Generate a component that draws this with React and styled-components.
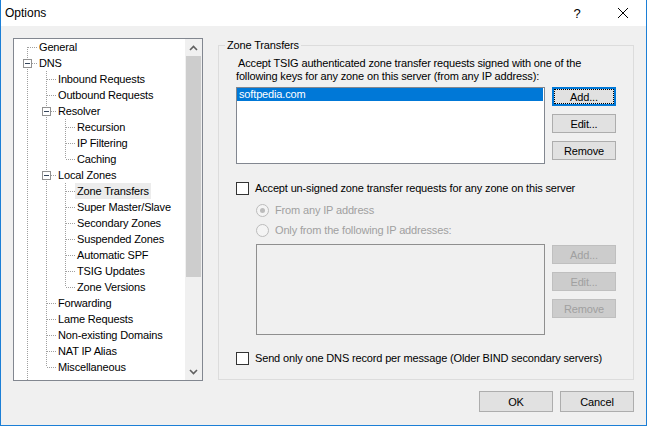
import React from "react";
import styled, { createGlobalStyle } from "styled-components";

const GlobalStyle = createGlobalStyle`
  html, body {
    margin: 0;
    padding: 0;
    background: #f0f0f0;
  }
  body {
    font-family: "Liberation Sans", Arial, sans-serif;
    font-size: 11px;
    letter-spacing: -0.15px;
    color: #000;
  }
`;

const treeItems = [
  ["General", 0],
  ["DNS", 0],
  ["Inbound Requests", 1],
  ["Outbound Requests", 1],
  ["Resolver", 1],
  ["Recursion", 2],
  ["IP Filtering", 2],
  ["Caching", 2],
  ["Local Zones", 1],
  ["Zone Transfers", 2],
  ["Super Master/Slave", 2],
  ["Secondary Zones", 2],
  ["Suspended Zones", 2],
  ["Automatic SPF", 2],
  ["TSIG Updates", 2],
  ["Zone Versions", 2],
  ["Forwarding", 1],
  ["Lame Requests", 1],
  ["Non-existing Domains", 1],
  ["NAT IP Alias", 1],
  ["Miscellaneous", 1],
];

// does the branch at `level` keep going below row i?
const continues = (i, level) => {
  for (let j = i + 1; j < treeItems.length; j++) {
    const d = treeItems[j][1];
    if (d < level) return false;
    if (d === level) return true;
  }
  return level === 0;
};

const Window = styled.div`
  width: 647px;
  height: 426px;
  box-sizing: border-box;
  border: 1px solid #1c7fd6;
  border-top: none;
  background: #f0f0f0;
  display: flex;
  flex-direction: column;
`;

const TitleBar = styled.div`
  height: 26px;
  background: #fff;
  display: flex;
  align-items: center;
  padding-left: 4px;
`;

const Title = styled.div`
  flex: 1;
  font-size: 12px;
  letter-spacing: 0;
`;

const CaptionButton = styled.div`
  width: 46px;
  height: 26px;
  display: flex;
  align-items: center;
  justify-content: center;
  font-size: 13px;
`;

const Body = styled.div`
  flex: 1;
  padding: 12px 12px 0 12px;
  display: flex;
  flex-direction: column;
`;

const Main = styled.div`
  display: flex;
  align-items: flex-start;
  gap: 15px;
`;

const Tree = styled.div`
  width: 190px;
  height: 343px;
  box-sizing: border-box;
  border: 1px solid #828790;
  background: #fff;
  display: flex;
`;

const TreeList = styled.div`
  flex: 1;
  overflow: hidden;
  display: flex;
  flex-direction: column;
`;

const TreeRow = styled.div`
  height: 16px;
  flex: none;
  display: flex;
  align-items: center;
  white-space: nowrap;
`;

const TreeLabel = styled.span`
  line-height: 16px;
  padding: 0 2px;
  margin-left: -2px;
  background: ${(p) => (p.$selected ? "#ececec" : "transparent")};
`;

const Filler = styled.div`
  flex: 1;
  background-image: linear-gradient(to bottom, #a0a0a0 50%, transparent 50%);
  background-size: 1px 2px;
  background-repeat: repeat-y;
  background-position: 13px 0;
`;

const ScrollBar = styled.div`
  width: 17px;
  background: #f0f0f0;
  display: flex;
  flex-direction: column;
`;

const ScrollArrow = styled.div`
  height: 17px;
  display: flex;
  align-items: center;
  justify-content: center;
`;

const ScrollTrack = styled.div`
  flex: 1;
  padding: 0 1px;
`;

const Thumb = styled.div`
  height: 221px;
  background: #cdcdcd;
`;

const Group = styled.fieldset`
  margin: 0;
  width: 416px;
  height: 342px;
  box-sizing: border-box;
  border: 1px solid #dcdcdc;
  padding: 0 17px 0 17px;
  min-width: 0;
`;

const Legend = styled.legend`
  line-height: 14px;
  padding: 0 2px;
  margin-left: -11px;
`;

const Desc = styled.div`
  margin-top: 5px;
  line-height: 13px;
  text-indent: 2px;
`;

const ListRow = styled.div`
  display: flex;
  gap: 7px;
  margin-top: ${(p) => p.$top}px;
  padding-left: ${(p) => p.$indent || 0}px;
`;

const ListBox = styled.div`
  flex: 1;
  height: ${(p) => p.$height}px;
  box-sizing: border-box;
  border: 1px solid ${(p) => (p.$disabled ? "#8f8f8f" : "#828790")};
  background: ${(p) => (p.$disabled ? "#f0f0f0" : "#fff")};
  padding: 0 1px 0 0;
`;

const ListItem = styled.div`
  height: 13px;
  line-height: 13px;
  padding-left: 2px;
  background: ${(p) => (p.$selected ? "#0078d7" : "transparent")};
  color: ${(p) => (p.$selected ? "#fff" : "#000")};
`;

const ButtonCol = styled.div`
  width: 64px;
  display: flex;
  flex-direction: column;
  gap: 8px;
  padding-top: ${(p) => p.$offset || 0}px;
`;

const Button = styled.div`
  height: ${(p) => p.$height || 19}px;
  width: ${(p) => (p.$width ? p.$width + "px" : "auto")};
  box-sizing: border-box;
  display: flex;
  align-items: center;
  justify-content: center;
  background: ${(p) => (p.$disabled ? "#cccccc" : "#e1e1e1")};
  border: ${(p) =>
    p.$default
      ? "2px solid #0078d7"
      : p.$disabled
      ? "1px solid #bfbfbf"
      : "1px solid #adadad"};
  color: ${(p) => (p.$disabled ? "#a0a0a0" : "#000")};
  position: relative;
`;

const FocusRing = styled.span`
  outline: 1px dotted #000;
  position: absolute;
  inset: 1px;
`;

const CheckRow = styled.div`
  display: flex;
  align-items: center;
  gap: 6px;
  height: ${(p) => p.$height || 16}px;
  margin-top: ${(p) => p.$top}px;
  padding-left: ${(p) => p.$indent || 0}px;
  color: ${(p) => (p.$disabled ? "#a0a0a0" : "#000")};
  white-space: nowrap;
`;

const CheckBox = styled.span`
  width: 13px;
  height: 13px;
  box-sizing: border-box;
  border: 1px solid #333;
  background: #fff;
  flex: none;
`;

const Radio = styled.span`
  width: 13px;
  height: 13px;
  box-sizing: border-box;
  border-radius: 50%;
  border: 1px solid #bcbcbc;
  background: #f4f4f4;
  flex: none;
  display: flex;
  align-items: center;
  justify-content: center;
  &::after {
    content: "";
    width: 5px;
    height: 5px;
    border-radius: 50%;
    background: ${(p) => (p.$checked ? "#bcbcbc" : "transparent")};
  }
`;

const Footer = styled.div`
  display: flex;
  justify-content: flex-end;
  gap: 7px;
  margin-top: 10px;
`;

const dash = { stroke: "#a0a0a0", strokeWidth: 1, strokeDasharray: "1 1", shapeRendering: "crispEdges" };

const Connector = ({ top, bottom, box }) => (
  <svg width="25" height="16" style={{ flex: "none" }}>
    {top && <line x1="13.5" y1="0" x2="13.5" y2="8" {...dash} />}
    {bottom && <line x1="13.5" y1="8" x2="13.5" y2="16" {...dash} />}
    <line x1="14" y1="8.5" x2="24" y2="8.5" {...dash} />
    {box && (
      <>
        <rect x="9.5" y="4.5" width="8" height="8" fill="#fff" stroke="#919191" shapeRendering="crispEdges" />
        <line x1="11" y1="8.5" x2="16" y2="8.5" stroke="#36465c" shapeRendering="crispEdges" />
      </>
    )}
  </svg>
);

const Guide = ({ on }) => (
  <svg width="19" height="16" style={{ flex: "none" }}>
    {on && <line x1="13.5" y1="0" x2="13.5" y2="16" {...dash} />}
  </svg>
);

const Chevron = ({ down }) => (
  <svg width="9" height="6" viewBox="0 0 9 6">
    <polyline
      points={down ? "1,1 4.5,4.5 8,1" : "1,5 4.5,1.5 8,5"}
      fill="none"
      stroke="#606060"
      strokeWidth="1.6"
    />
  </svg>
);

const OptionsTree = () => (
  <Tree>
    <TreeList>
      {treeItems.map(([label, depth], i) => {
        const next = treeItems[i + 1];
        const hasKids = next && next[1] > depth;
        const guides = [];
        for (let l = 0; l < depth; l++) guides.push(<Guide key={l} on={continues(i, l)} />);
        return (
          <TreeRow key={label}>
            {guides}
            <Connector top={i > 0} bottom={continues(i, depth)} box={hasKids} />
            <TreeLabel $selected={label === "Zone Transfers"}>{label}</TreeLabel>
          </TreeRow>
        );
      })}
      <Filler />
    </TreeList>
    <ScrollBar>
      <ScrollArrow>
        <Chevron />
      </ScrollArrow>
      <ScrollTrack>
        <Thumb />
      </ScrollTrack>
      <ScrollArrow>
        <Chevron down />
      </ScrollArrow>
    </ScrollBar>
  </Tree>
);

export default function App() {
  return (
    <>
      <GlobalStyle />
      <Window>
        <TitleBar>
          <Title>Options</Title>
          <CaptionButton>?</CaptionButton>
          <CaptionButton>
            <svg width="10" height="10" viewBox="0 0 10 10">
              <path d="M0 0 L10 10 M10 0 L0 10" stroke="#000" strokeWidth="1" />
            </svg>
          </CaptionButton>
        </TitleBar>
        <Body>
          <Main>
            <OptionsTree />
            <Group>
              <Legend>Zone Transfers</Legend>
              <Desc>
                Accept TSIG authenticated zone transfer requests signed with one of the
                <br />
                following keys for any zone on this server (from any IP address):
              </Desc>
              <ListRow $top={4}>
                <ListBox $height={77}>
                  <ListItem $selected>softpedia.com</ListItem>
                </ListBox>
                <ButtonCol>
                  <Button $default>
                    <FocusRing />
                    Add...
                  </Button>
                  <Button>Edit...</Button>
                  <Button>Remove</Button>
                </ButtonCol>
              </ListRow>
              <CheckRow $top={16}>
                <CheckBox />
                Accept un-signed zone transfer requests for any zone on this server
              </CheckRow>
              <CheckRow $top={4} $height={20} $indent={20} $disabled>
                <Radio $checked />
                From any IP address
              </CheckRow>
              <CheckRow $top={0} $height={20} $indent={20} $disabled>
                <Radio />
                Only from the following IP addresses:
              </CheckRow>
              <ListRow $top={4} $indent={20}>
                <ListBox $height={91} $disabled />
                <ButtonCol $offset={1}>
                  <Button $disabled>Add...</Button>
                  <Button $disabled>Edit...</Button>
                  <Button $disabled>Remove</Button>
                </ButtonCol>
              </ListRow>
              <CheckRow $top={15}>
                <CheckBox />
                Send only one DNS record per message (Older BIND secondary servers)
              </CheckRow>
            </Group>
          </Main>
          <Footer>
            <Button $width={74} $height={21}>OK</Button>
            <Button $width={74} $height={21}>Cancel</Button>
          </Footer>
        </Body>
      </Window>
    </>
  );
}
